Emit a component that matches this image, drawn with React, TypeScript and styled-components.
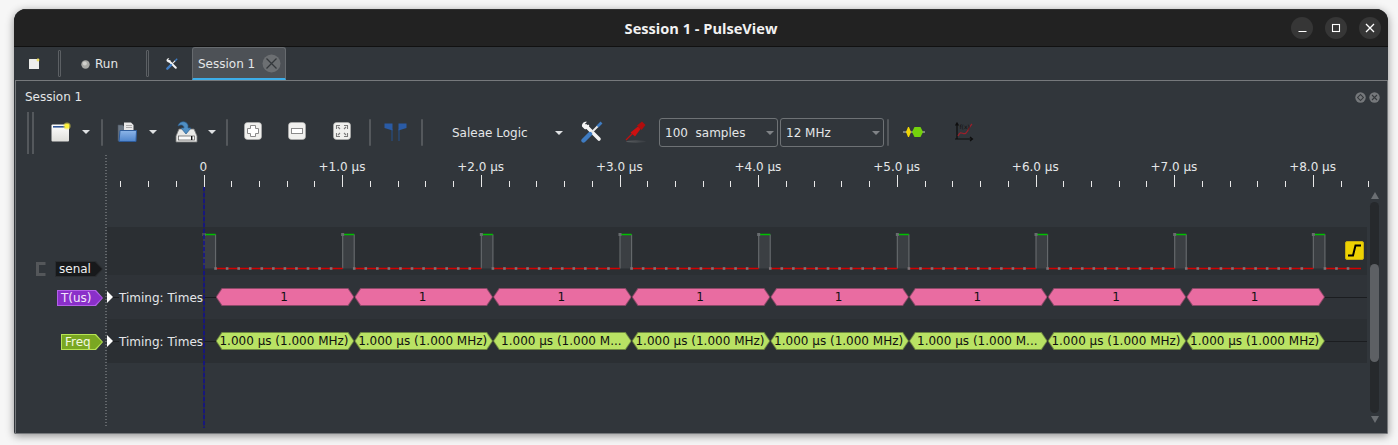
import React from 'react'
import styled, { createGlobalStyle } from 'styled-components'

const MAJOR = 138.67
const SAMPLE = MAJOR / 12

const GlobalStyle = createGlobalStyle`
  html, body { margin: 0; padding: 0; background: #f6f6f6; overflow: hidden; }
  body { width: 1398px; height: 445px; font-family: "DejaVu Sans", sans-serif; font-size: 12px; color: #e4e6e8; }
  * { box-sizing: border-box; }
`

const Page = styled.div`
  width: 1398px;
  height: 445px;
  padding: 9px 10px 11px 14px;
`

const Window = styled.div`
  height: 425px;
  display: flex;
  flex-direction: column;
  background: #31363b;
  border-radius: 12px 12px 2px 2px;
  overflow: hidden;
  box-shadow: 0 2px 9px rgba(0, 0, 0, 0.42);
`

const TitleBar = styled.div`
  height: 38px;
  flex: none;
  position: relative;
  display: flex;
  align-items: center;
  justify-content: flex-end;
  gap: 12px;
  padding: 0 7px 0 0;
  background: #222222;
  border-top: 1px solid #303030;
  border-bottom: 1px solid #111;
`

const Title = styled.div`
  position: absolute;
  left: 0;
  right: 0;
  text-align: center;
  font-family: "Open Sans", sans-serif;
  font-weight: 700;
  font-size: 14.6px;
  color: #f2f2f2;
`

const WinButton = styled.div`
  width: 22px;
  height: 22px;
  border-radius: 50%;
  background: #363636;
  display: flex;
  align-items: center;
  justify-content: center;
`

const TabBar = styled.div`
  height: 33px;
  flex: none;
  display: flex;
  align-items: stretch;
  background: #31363b;
`

const TabTool = styled.div<{ $w: number; $pl?: number; $pr?: number }>`
  width: ${p => p.$w}px;
  display: flex;
  align-items: center;
  justify-content: center;
  gap: 5px;
  padding: 1px ${p => p.$pr ?? 0}px 0 ${p => p.$pl ?? 0}px;
`

const RunTool = styled(TabTool)`
  justify-content: flex-start;
`

const Grip = styled.div`
  width: 3px;
  margin: 3px 0 3px;
  border: 1px solid #5c6064;
  border-radius: 1px;
`

const Tab = styled.div`
  width: 94px;
  display: flex;
  align-items: center;
  padding: 1px 0 0 5px;
  gap: 7px;
  background: #4d5156;
  border: 1px solid #666a6e;
  border-bottom: 2px solid #3daee9;
  border-radius: 3px 3px 0 0;
`

const Dock = styled.div`
  flex: 1;
  min-height: 0;
  margin: 0 0 0 1px;
  border: 1px solid #76797c;
  display: flex;
  flex-direction: column;
`

const DockHead = styled.div`
  height: 29px;
  flex: none;
  display: flex;
  align-items: center;
  justify-content: space-between;
  padding: 3px 7px 0 9px;
`

const DockButtons = styled.div`
  display: flex;
  gap: 3px;
`

const Toolbar = styled.div`
  height: 45px;
  flex: none;
  display: flex;
  align-items: center;
  padding-left: 11px;
`

const Handle = styled.div`
  width: 7px;
  height: 42px;
  margin-right: 17px;
  border-left: 2px solid #54585c;
  border-right: 2px solid #54585c;
`

const Sep = styled.div<{ $l?: number; $r?: number }>`
  width: 2px;
  height: 27px;
  flex: none;
  background: #54585c;
  margin: 0 ${p => p.$r ?? 0}px 0 ${p => p.$l ?? 0}px;
  border-radius: 1px;
`

const ToolSlot = styled.div<{ $w: number; $up?: number }>`
  width: ${p => p.$w}px;
  flex: none;
  display: flex;
  align-items: center;
  justify-content: center;
  margin-bottom: ${p => p.$up ?? 2}px;
`

const Caret = styled.div<{ $c?: string }>`
  width: 0;
  height: 0;
  flex: none;
  border-left: 4px solid transparent;
  border-right: 4px solid transparent;
  border-top: 4px solid ${p => p.$c ?? '#dfe1e3'};
`

const DeviceName = styled.div`
  width: 140px;
  flex: none;
  display: flex;
  align-items: center;
  justify-content: space-between;
  padding: 0 0 0 29px;
`

const Combo = styled.div<{ $w: number; $l?: number }>`
  width: ${p => p.$w}px;
  height: 29px;
  flex: none;
  margin: 0 2px 0 ${p => p.$l ?? 0}px;
  border: 1px solid #6e7275;
  border-radius: 3px;
  display: flex;
  align-items: center;
  justify-content: space-between;
  padding: 0 3px 0 5px;
  white-space: pre;
`

const TraceView = styled.div`
  flex: 1;
  min-height: 0;
  display: flex;
  position: relative;
`

const TraceArea = styled.div`
  width: 1351px;
  flex: none;
  position: relative;
  display: flex;
  flex-direction: column;
`

const Ruler = styled.div`
  height: 72px;
  flex: none;
  position: relative;
  padding: 4px 0 0 118px;
`

const RulerLabels = styled.div`
  display: flex;
  height: 16px;
  align-items: center;
`

const RulerLabel = styled.div`
  width: ${MAJOR}px;
  flex: none;
  text-align: center;
  white-space: nowrap;
`

const TickSvg = styled.svg`
  display: block;
  position: absolute;
  left: 0;
  top: 20px;
  overflow: visible;
`

const Row = styled.div<{ $h: number }>`
  height: ${p => p.$h}px;
  flex: none;
  display: flex;
`

const LabelCell = styled.div<{ $pb: number; $mb?: number }>`
  width: 89px;
  flex: none;
  display: flex;
  align-items: flex-end;
  justify-content: flex-end;
  gap: 8px;
  padding-bottom: ${p => p.$pb}px;
  margin-bottom: ${p => p.$mb ?? 0}px;
  padding-right: 2px;
`

const Content = styled.div<{ $dark?: boolean; $line?: boolean }>`
  flex: 1;
  min-width: 0;
  position: relative;
  display: flex;
  align-items: center;
  margin-left: 2px;
  background: ${p => (p.$dark ? '#2b2f33' : '#2f3338')};
  &::before {
    content: '';
    display: ${p => (p.$line ? 'block' : 'none')};
    position: absolute;
    left: 0;
    right: 0;
    top: 22px;
    height: 1px;
    background: #1b1d20;
  }
`

const TagBody = styled.div<{ $bg: string; $line: string; $w: number; $c: string }>`
  width: ${p => p.$w}px;
  height: 16px;
  flex: none;
  background: ${p => p.$line};
  clip-path: polygon(0 0, calc(100% - 7px) 0, 100% 50%, calc(100% - 7px) 100%, 0 100%);
  padding: 1px;
  & > div {
    height: 100%;
    background: ${p => p.$bg};
    clip-path: polygon(0 0, calc(100% - 7px) 0, 100% 50%, calc(100% - 7px) 100%, 0 100%);
    color: ${p => p.$c};
    line-height: 14px;
    padding-left: 3px;
    white-space: nowrap;
  }
`

const Expander = styled.div`
  position: relative;
  width: 0;
  height: 0;
  border-top: 6px solid transparent;
  border-bottom: 6px solid transparent;
  border-left: 6px solid #fff;
  flex: none;
`

const DecoderName = styled.div<{ $dark?: boolean }>`
  position: relative;
  width: 85px;
  flex: none;
  margin: 0 11.7px 0 6px;
  white-space: nowrap;
  line-height: 16px;
  padding-top: 1px;
  background: ${p => (p.$dark ? '#2b2f33' : '#2f3338')};
`

const Strip = styled.div`
  position: relative;
  display: flex;
`

const Hex = styled.div<{ $line: string; $fill: string }>`
  width: ${MAJOR}px;
  height: 18px;
  flex: none;
  padding: 1px;
  background: ${p => p.$line};
  clip-path: polygon(6px 0, calc(100% - 6px) 0, 100% 50%, calc(100% - 6px) 100%, 6px 100%, 0 50%);
  & > div {
    height: 100%;
    background: ${p => p.$fill};
    clip-path: polygon(5.5px 0, calc(100% - 5.5px) 0, 100% 50%, calc(100% - 5.5px) 100%, 5.5px 100%, 0 50%);
    color: #101010;
    text-align: center;
    line-height: 17px;
    padding-right: 2px;
    white-space: nowrap;
    overflow: hidden;
  }
`

const DottedRule = styled.div`
  position: absolute;
  left: 89px;
  top: 0;
  bottom: 5px;
  width: 2px;
  background: repeating-linear-gradient(to bottom, #63676b 0 1px, transparent 1px 3px);
`

const Cursor = styled.div`
  position: absolute;
  left: 187px;
  top: 32px;
  bottom: 5px;
  width: 2px;
  background: repeating-linear-gradient(to bottom, rgba(18, 18, 135, 0.85) 0 4px, rgba(30, 30, 90, 0.5) 4px 6px);
`

const TriggerBadge = styled.div`
  position: absolute;
  right: 3px;
  top: 14px;
  width: 19px;
  height: 19px;
  border-radius: 2px;
  background: #eed202;
  border: 1px solid #c5ad10;
  display: flex;
  align-items: center;
  justify-content: center;
`

const ScrollColumn = styled.div`
  width: 15px;
  flex: none;
  display: flex;
  flex-direction: column;
  align-items: center;
  padding: 37px 0 10px 0;
  gap: 3px;
`

const ArrowUp = styled.div`
  width: 0;
  height: 0;
  flex: none;
  border-left: 4px solid transparent;
  border-right: 4px solid transparent;
  border-bottom: 7px solid #6b6f73;
`

const ArrowDown = styled(ArrowUp)`
  border-bottom: 0;
  border-top: 7px solid #6b6f73;
`

const ScrollTrack = styled.div`
  flex: 1;
  width: 9px;
  border-radius: 5px;
  background: #26292c;
  padding-top: 62px;
`

const ScrollThumb = styled.div`
  height: 98px;
  border-radius: 5px;
  background: #5d6064;
`

const DockDot = () => (
  <svg width="11" height="11" viewBox="0 0 11 11">
    <circle cx="5.5" cy="5.5" r="5.2" fill="#75787b" />
    <rect x="3.4" y="3.4" width="4.2" height="4.2" transform="rotate(45 5.5 5.5)" fill="none" stroke="#35393d" />
  </svg>
)

const DockClose = () => (
  <svg width="11" height="11" viewBox="0 0 11 11">
    <circle cx="5.5" cy="5.5" r="5.2" fill="#75787b" />
    <path d="M3 3l5 5M8 3l-5 5" stroke="#35393d" strokeWidth="1.1" />
  </svg>
)

const StopIcon = () => (
  <svg width="12" height="12" viewBox="0 0 12 12">
    <rect x="1" y="1" width="10" height="10" rx="0.5" fill="#eeeeec" />
    <circle cx="10" cy="2" r="1.4" fill="#f0e060" />
  </svg>
)

const RunDot = () => (
  <svg width="9" height="9" viewBox="0 0 9 9">
    <circle cx="4.5" cy="4.5" r="4.2" fill="#a9aaa6" />
    <circle cx="3.8" cy="3.6" r="2" fill="#d0d0cc" />
  </svg>
)

const TabClose = () => (
  <svg width="19" height="19" viewBox="0 0 19 19">
    <circle cx="9.5" cy="9.5" r="9" fill="#6c6f72" />
    <path d="M4.5 4.5l10 10M14.5 4.5l-10 10" stroke="#34383c" strokeWidth="1.3" />
  </svg>
)

const NewIcon = () => (
  <svg width="20" height="20" viewBox="0 0 20 20">
    <defs>
      <linearGradient id="page" x1="0" y1="0" x2="0" y2="1">
        <stop offset="0" stopColor="#ffffff" />
        <stop offset="1" stopColor="#dededa" />
      </linearGradient>
    </defs>
    <rect x="0.5" y="2.5" width="17.5" height="17" rx="1" fill="url(#page)" />
    <rect x="2" y="4" width="13" height="1.6" fill="#2f5596" />
    <circle cx="16" cy="4" r="3.6" fill="#f3e54a" opacity="0.6" />
    <circle cx="16" cy="4" r="2.3" fill="#fdf23a" />
  </svg>
)

const OpenIcon = () => (
  <svg width="22" height="22" viewBox="0 0 22 22">
    <defs>
      <linearGradient id="folder" x1="0" y1="0" x2="0" y2="1">
        <stop offset="0" stopColor="#8db5e8" />
        <stop offset="1" stopColor="#4f85cc" />
      </linearGradient>
    </defs>
    <path d="M2 4h5v1h2v15H2z" fill="#6a7683" stroke="#4c5560" strokeWidth="0.6" />
    <path d="M8 1.500h7l2.500 2.500V10H8z" fill="#e8e8e8" />
    <path d="M10 4.500h6M10 6.500h6" stroke="#9a9a9a" strokeWidth="0.8" />
    <path d="M4 9.500H20.500L20 20.500H3z" fill="url(#folder)" stroke="#2e5c9b" strokeWidth="1" />
  </svg>
)

const SaveIcon = () => (
  <svg width="23" height="23" viewBox="0 0 23 23">
    <path d="M4 9h15l3 7v6H1v-6z" fill="#e8e8e6" stroke="#77797a" strokeWidth="0.8" />
    <rect x="3.5" y="16" width="16" height="4" fill="#fafafa" stroke="#555" strokeWidth="0.7" />
    <rect x="16" y="16" width="1.4" height="4" fill="#111" />
    <path d="M3 6C4 1 11 0 13 5v3h3l-5 6-5-6h3c0-3-3-4-6-2z" fill="#4f8fc4" stroke="#2c5f8f" strokeWidth="0.7" />
  </svg>
)

const ZoomFrame = ({ children }: { children: React.ReactNode }) => (
  <svg width="18" height="18" viewBox="0 0 18 18">
    <rect x="0.5" y="0.5" width="17" height="17" rx="3" fill="#f0f0ee" stroke="#b5b5b3" strokeWidth="0.6" />
    {children}
  </svg>
)

const ZoomIn = () => (
  <ZoomFrame>
    <path d="M6.500 3.500h5v3h3v5h-3v3h-5v-3h-3v-5h3z" fill="#ffffff" stroke="#8a8a8a" strokeWidth="1" />
  </ZoomFrame>
)

const ZoomOut = () => (
  <ZoomFrame>
    <rect x="3.500" y="6.500" width="11" height="5" fill="#ffffff" stroke="#8a8a8a" strokeWidth="1" />
  </ZoomFrame>
)

const ZoomFit = () => (
  <ZoomFrame>
    <path
      d="M7 3.500H3.500V7M11 3.500h3.500V7M7 14.500H3.500V11M11 14.500h3.500V11M5 5l2 2M13 5l-2 2M5 13l2-2M13 13l-2-2"
      fill="none"
      stroke="#7a7a7a"
      strokeWidth="1.1"
    />
  </ZoomFrame>
)

const FlagsIcon = () => (
  <svg width="23" height="18" viewBox="0 0 23 18">
    <path d="M7.500 6H8.500V18H7.500zM14.500 6H15.500V18H14.500z" fill="#24508f" />
    <path d="M0.500 0.500H8.500V7.500L7 7L0.500 5z" fill="#2a5ba5" />
    <path d="M14.500 0.500H22.500V5L16 7L14.500 7.500z" fill="#2a5ba5" />
  </svg>
)

const ToolsIcon = ({ size = 22 }: { size?: number }) => (
  <svg width={size} height={size} viewBox="0 0 22 22">
    <path d="M5 5L18 18" stroke="#f4f4f4" strokeWidth="3.6" strokeLinecap="round" />
    <path d="M1 5.500C0.500 2.500 3 0 6 0.800L3.800 3l1.500 2L8 3.500C9 6.500 6 9 3.500 8z" fill="#f4f4f4" />
    <path d="M8.500 13.500L17 5" stroke="#e8e8e8" strokeWidth="2" />
    <path d="M2.500 19.500L9 13" stroke="#3f7cc2" strokeWidth="4.400" strokeLinecap="round" />
    <path d="M16.500 5.500L20.500 1.500" stroke="#3f7cc2" strokeWidth="2.600" />
  </svg>
)

const ProbeIcon = () => (
  <svg width="22" height="22" viewBox="0 0 22 22">
    <defs>
      <linearGradient id="probeShadow" x1="0" y1="0" x2="1" y2="0">
        <stop offset="0" stopColor="#5e6164" stopOpacity="0.9" />
        <stop offset="1" stopColor="#5e6164" stopOpacity="0.15" />
      </linearGradient>
    </defs>
    <ellipse cx="11" cy="20.500" rx="10" ry="1.200" fill="url(#probeShadow)" />
    <path d="M1 19L8 12" stroke="#c01010" strokeWidth="1.300" />
    <path d="M5.500 11.500L13 5.500 15.500 8 10 15.500z" fill="#cc1010" />
    <path d="M12 4.500L17 0.500 20.500 4 16.500 9z" fill="#b00d0d" />
  </svg>
)

const DecoderIcon = () => (
  <svg width="22" height="12" viewBox="0 0 22 12">
    <path d="M0 6h22" stroke="#c8cac0" strokeWidth="1" />
    <path d="M3 6l2-5h1l2 5-2 5H5z" fill="#efd505" />
    <path d="M9 6l2.500-5h6L20 6l-2.500 5h-6z" fill="#74d20c" />
  </svg>
)

const MathIcon = () => (
  <svg width="20" height="20" viewBox="0 0 20 20">
    <path d="M3 1.500v15.500M1 17h17M1.500 3.500L3 1l1.500 2.500M16 15l2.500 2-2.500 2" fill="none" stroke="#0e0e0e" strokeWidth="1.200" />
    <path d="M4 14c3-7 5 0 8-3s3-6 6-9" fill="none" stroke="#9c1f2a" strokeWidth="1.200" />
    <text x="5.500" y="6.500" fontSize="6" fill="#111" fontFamily="DejaVu Sans">f(x)</text>
  </svg>
)

const EdgeIcon = () => (
  <svg width="15" height="13" viewBox="0 0 15 13">
    <path d="M1 11.500H6L8.500 1.500H14" fill="none" stroke="#000" strokeWidth="2" />
  </svg>
)

const ChannelIcon = () => (
  <svg width="12" height="16" viewBox="0 0 12 16">
    <path d="M10.500 2.500H2.500V13.500H10.500" fill="none" stroke="#54575a" strokeWidth="3" />
  </svg>
)

const Ticks = () => {
  const marks = []
  for (let i = -3; i <= 42; i++) {
    const major = i % 5 === 0
    const x = Math.floor(188 + (i * MAJOR) / 5) + 0.5
    marks.push(<line key={i} x1={x} x2={x} y1={major ? 0 : 6} y2={12} stroke="#e8e8e8" strokeWidth="1" />)
  }
  return (
    <TickSvg width="1351" height="13">
      {marks}
    </TickSvg>
  )
}

const Waveform = () => {
  const x0 = 97
  const hi = 7.5
  const lo = 41.5
  const pulses = []
  const dots = []
  const lows = []
  for (let p = 0; p < 9; p++) {
    const a = x0 + p * MAJOR
    const b = a + SAMPLE
    pulses.push(
      <g key={p}>
        <rect x={a} y={hi} width={SAMPLE} height={lo - hi} fill="#3b3f43" />
        <path d={`M${a} ${lo}V${hi}M${b} ${hi}V${lo}`} stroke="#64686b" strokeWidth="1.2" fill="none" />
        <path d={`M${a} ${hi}H${b}`} stroke="#00c000" strokeWidth="1.5" />
        <rect x={a - 1.5} y={hi - 1.5} width="3" height="3" fill="#686c6f" />
      </g>
    )
    lows.push(<line key={p} x1={b} x2={Math.min(b + 11 * SAMPLE, x0 + 1157)} y1={lo} y2={lo} stroke="#d40000" strokeWidth="1.6" />)
  }
  for (let s = 1; s < 100; s++) {
    if (s % 12 === 0) continue
    const x = x0 + s * SAMPLE
    dots.push(<rect key={s} x={x - 1.3} y={lo - 1.3} width="2.6" height="2.6" fill="#7d7478" />)
  }
  return (
    <svg width="1260" height="48" style={{ display: 'block' }}>
      {pulses}
      {lows}
      {dots}
    </svg>
  )
}

const freqLabels = [
  '1.000 µs (1.000 MHz)',
  '1.000 µs (1.000 MHz)',
  '1.000 µs (1.000 M...',
  '1.000 µs (1.000 MHz)',
  '1.000 µs (1.000 MHz)',
  '1.000 µs (1.000 M...',
  '1.000 µs (1.000 MHz)',
  '1.000 µs (1.000 MHz)',
]

const rulerLabels = ['0', '+1.0 µs', '+2.0 µs', '+3.0 µs', '+4.0 µs', '+5.0 µs', '+6.0 µs', '+7.0 µs', '+8.0 µs']

const App = () => {
  return (
    <Page>
      <GlobalStyle />
      <Window>
        <TitleBar>
          <Title>Session 1 - PulseView</Title>
          <WinButton>
            <svg width="10" height="10" viewBox="0 0 10 10"><path d="M1.500 8.500h8" stroke="#fff" strokeWidth="1.2" /></svg>
          </WinButton>
          <WinButton>
            <svg width="10" height="10" viewBox="0 0 10 10"><rect x="1.500" y="1.500" width="7" height="7" fill="none" stroke="#fff" strokeWidth="1.1" /></svg>
          </WinButton>
          <WinButton>
            <svg width="10" height="10" viewBox="0 0 10 10"><path d="M1 1l8 8M9 1l-8 8" stroke="#fff" strokeWidth="1.3" /></svg>
          </WinButton>
        </TitleBar>
        <TabBar>
          <TabTool $w={44} $pr={4}><StopIcon /></TabTool>
          <Grip />
          <RunTool $w={85} $pl={20}><RunDot /><span>Run</span></RunTool>
          <Grip />
          <TabTool $w={43} $pl={3}><ToolsIcon size={12} /></TabTool>
          <Tab><span>Session 1</span><TabClose /></Tab>
        </TabBar>
        <Dock>
          <DockHead>
            <span>Session 1</span>
            <DockButtons><DockDot /><DockClose /></DockButtons>
          </DockHead>
          <Toolbar>
            <Handle />
            <ToolSlot $w={20}><NewIcon /></ToolSlot>
            <ToolSlot $w={30}><Caret /></ToolSlot>
            <Sep $r={13} />
            <ToolSlot $w={22}><OpenIcon /></ToolSlot>
            <ToolSlot $w={30}><Caret /></ToolSlot>
            <ToolSlot $w={36}><SaveIcon /></ToolSlot>
            <ToolSlot $w={16}><Caret /></ToolSlot>
            <Sep $l={6} />
            <ToolSlot $w={50} $up={4}><ZoomIn /></ToolSlot>
            <ToolSlot $w={37} $up={4}><ZoomOut /></ToolSlot>
            <ToolSlot $w={54} $up={4}><ZoomFit /></ToolSlot>
            <Sep />
            <ToolSlot $w={48}><FlagsIcon /></ToolSlot>
            <Sep $l={2} />
            <DeviceName><span>Saleae Logic</span><Caret /></DeviceName>
            <ToolSlot $w={58}><ToolsIcon /></ToolSlot>
            <ToolSlot $w={30}><ProbeIcon /></ToolSlot>
            <Combo $w={119} $l={8}><span>100  samples</span><Caret $c="#808387" /></Combo>
            <Combo $w={104}><span>12 MHz</span><Caret $c="#808387" /></Combo>
            <Sep $l={1} />
            <ToolSlot $w={50}><DecoderIcon /></ToolSlot>
            <ToolSlot $w={50}><MathIcon /></ToolSlot>
          </Toolbar>
          <TraceView>
            <TraceArea>
              <Ruler>
                <RulerLabels>
                  {rulerLabels.map(t => <RulerLabel key={t}>{t}</RulerLabel>)}
                </RulerLabels>
                <Ticks />
              </Ruler>
              <Row $h={48}>
                <LabelCell $pb={0} $mb={-2}>
                  <ChannelIcon />
                  <TagBody $bg="#17191b" $line="#2a2d30" $w={48} $c="#f0f0f0">
                    <div>senal</div>
                  </TagBody>
                </LabelCell>
                <Content $dark>
                  <Waveform />
                  <TriggerBadge><EdgeIcon /></TriggerBadge>
                </Content>
              </Row>
              <Row $h={44}>
                <LabelCell $pb={13}>
                  <TagBody $bg="#8a2fc9" $line="#b35fe8" $w={46} $c="#f3e6fb">
                    <div>T(us)</div>
                  </TagBody>
                </LabelCell>
                <Content $line>
                  <Expander />
                  <DecoderName>Timing: Times</DecoderName>
                  <Strip>
                    {Array.from({ length: 8 }).map((_, i) => (
                      <Hex key={i} $line="#8c4968" $fill="#e96ca1"><div>1</div></Hex>
                    ))}
                  </Strip>
                </Content>
              </Row>
              <Row $h={44}>
                <LabelCell $pb={13}>
                  <TagBody $bg="#7aa722" $line="#b7e455" $w={42} $c="#f2f8e0">
                    <div>Freq</div>
                  </TagBody>
                </LabelCell>
                <Content $dark $line>
                  <Expander />
                  <DecoderName $dark>Timing: Times</DecoderName>
                  <Strip>
                    {freqLabels.map((t, i) => (
                      <Hex key={i} $line="#6f8a40" $fill="#b9e264"><div>{t}</div></Hex>
                    ))}
                  </Strip>
                </Content>
              </Row>
              <DottedRule />
              <Cursor />
            </TraceArea>
            <ScrollColumn>
              <ArrowUp />
              <ScrollTrack><ScrollThumb /></ScrollTrack>
              <ArrowDown />
            </ScrollColumn>
          </TraceView>
        </Dock>
      </Window>
    </Page>
  )
}

export default App
